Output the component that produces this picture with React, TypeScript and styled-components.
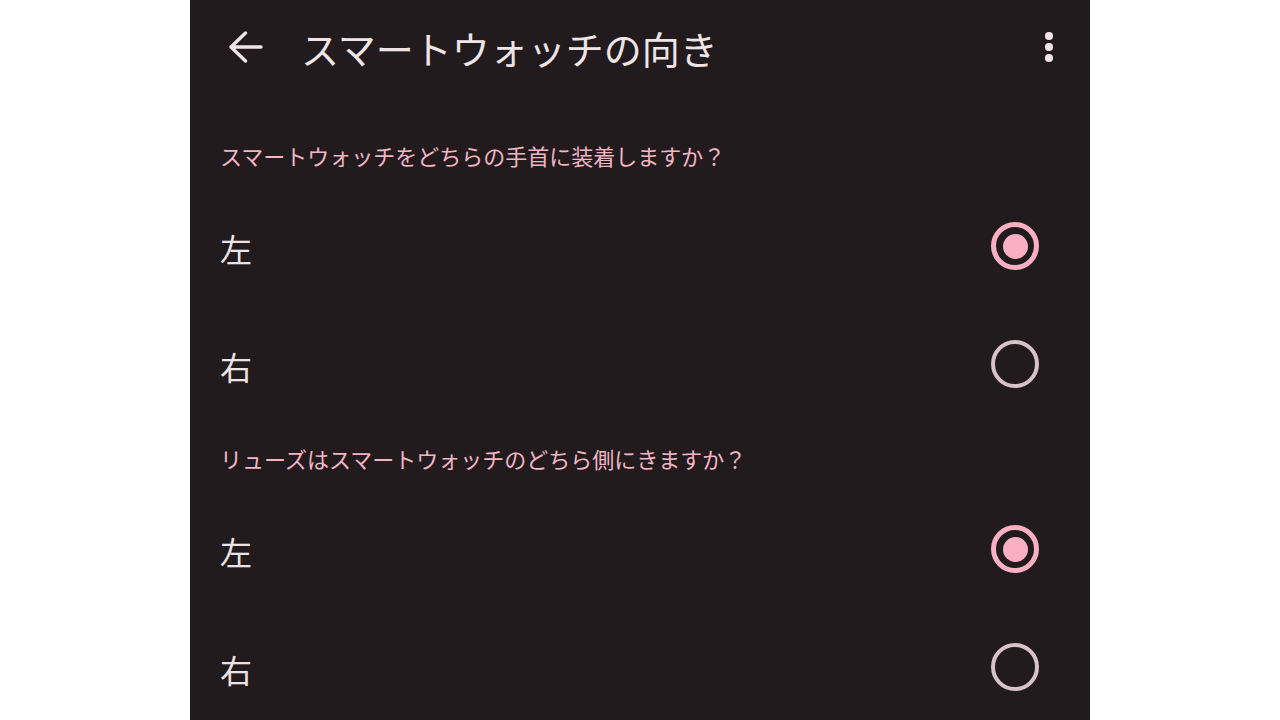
import React, { useState } from "react";
import styled, { createGlobalStyle } from "styled-components";

const GlobalStyle = createGlobalStyle`
  html, body {
    margin: 0;
    padding: 0;
    background: #ffffff;
    height: 100%;
  }
  body {
    font-family: "Noto Sans CJK JP", "Noto Sans", sans-serif;
  }
`;

const Page = styled.div`
  width: 1280px;
  height: 720px;
  display: flex;
  justify-content: center;
  background: #ffffff;
  overflow: hidden;
`;

const Screen = styled.div`
  width: 900px;
  height: 720px;
  background: #211b1e;
  display: flex;
  flex-direction: column;
  overflow: hidden;
`;

const TopBar = styled.header`
  height: 94px;
  flex: 0 0 94px;
  display: flex;
  align-items: center;
  padding: 0 29px 0 38px;
  box-sizing: border-box;
`;

const IconButton = styled.button<{ $w: number }>`
  border: none;
  background: transparent;
  padding: 0;
  margin: 0;
  display: flex;
  align-items: center;
  justify-content: center;
  cursor: pointer;
  width: ${(p) => p.$w}px;
  height: 48px;
`;

const Title = styled.h1`
  margin: 0 0 0 37px;
  flex: 1;
  font-family: "Noto Sans CJK JP", sans-serif;
  font-weight: 400;
  font-size: 38px;
  line-height: 48px;
  padding-top: 2px;
  color: #efe5e7;
  letter-spacing: 0;
`;

const Dots = styled.div`
  display: flex;
  flex-direction: column;
  align-items: center;
  gap: 3.5px;
`;

const Dot = styled.span`
  width: 7.5px;
  height: 7.5px;
  border-radius: 50%;
  background: #efe5e7;
`;

const Section = styled.section<{ $first?: boolean }>`
  display: flex;
  flex-direction: column;
  margin-top: ${(p) => (p.$first ? "26px" : "0")};
`;

const SectionTitle = styled.h2`
  margin: 0;
  padding: 20px 30px 17px 30px;
  font-family: "Noto Sans CJK JP", sans-serif;
  font-weight: 400;
  font-size: 22px;
  line-height: 30px;
  color: #f2b5c4;
`;

const Row = styled.label`
  height: 118px;
  flex: 0 0 118px;
  display: flex;
  align-items: center;
  justify-content: space-between;
  padding: 0 51px 0 30px;
  box-sizing: border-box;
  cursor: pointer;
`;

const RowLabel = styled.span`
  font-family: "Noto Sans CJK JP", sans-serif;
  font-weight: 400;
  font-size: 32px;
  line-height: 40px;
  padding-top: 4px;
  color: #ede2e4;
`;

const Radio = styled.span<{ $checked: boolean }>`
  width: 48px;
  height: 48px;
  box-sizing: border-box;
  border-radius: 50%;
  border: ${(p) => (p.$checked ? "5px solid #fab0c2" : "4.5px solid #d8c2c7")};
  display: flex;
  align-items: center;
  justify-content: center;
  &::after {
    content: "";
    display: ${(p) => (p.$checked ? "block" : "none")};
    width: 25px;
    height: 25px;
    border-radius: 50%;
    background: #fab0c2;
  }
`;

type Group = { title: string; options: string[] };

const groups: Group[] = [
  { title: "スマートウォッチをどちらの手首に装着しますか？", options: ["左", "右"] },
  { title: "リューズはスマートウォッチのどちら側にきますか？", options: ["左", "右"] },
];

export default function App() {
  const [sel, setSel] = useState<number[]>([0, 0]);
  return (
    <>
      <GlobalStyle />
      <Page>
        <Screen>
          <TopBar>
            <IconButton $w={36} aria-label="戻る">
              <svg width="36" height="36" viewBox="0 0 36 36" fill="none">
                <path
                  d="M3 18H33M17.5 4L3 18L17.5 32"
                  stroke="#efe5e7"
                  strokeWidth="3.4"
                  strokeLinecap="round"
                  strokeLinejoin="round"
                />
              </svg>
            </IconButton>
            <Title>スマートウォッチの向き</Title>
            <IconButton $w={24} aria-label="その他">
              <Dots>
                <Dot />
                <Dot />
                <Dot />
              </Dots>
            </IconButton>
          </TopBar>
          {groups.map((g, gi) => (
            <Section key={gi} $first={gi === 0}>
              <SectionTitle>{g.title}</SectionTitle>
              {g.options.map((o, oi) => (
                <Row
                  key={oi}
                  onClick={() =>
                    setSel((s) => s.map((v, i) => (i === gi ? oi : v)))
                  }
                >
                  <RowLabel>{o}</RowLabel>
                  <Radio $checked={sel[gi] === oi} />
                </Row>
              ))}
            </Section>
          ))}
        </Screen>
      </Page>
    </>
  );
}
